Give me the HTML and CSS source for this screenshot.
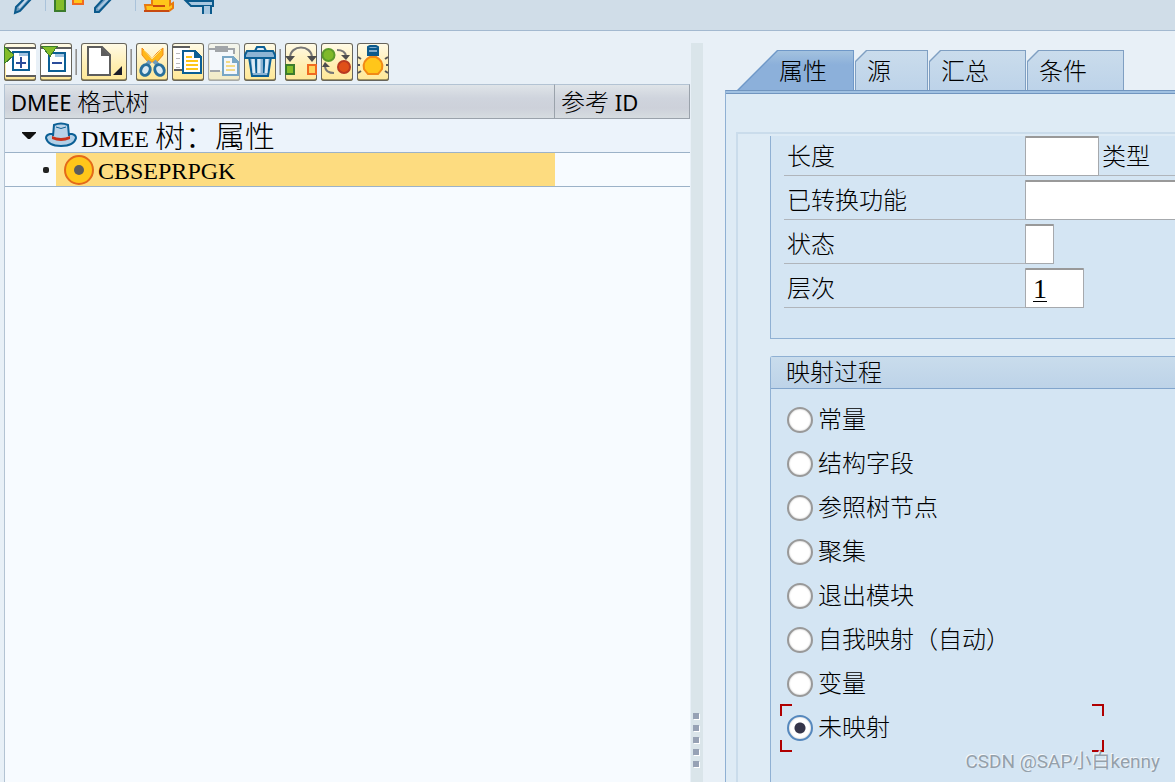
FILE: index.html
```
<!DOCTYPE html>
<html lang="zh-CN">
<head>
<meta charset="utf-8">
<title>DMEE 格式树</title>
<link rel="stylesheet" href="styles.css">
</head>
<body>
<header class="topbar">
  <svg class="topbar-icons" width="240" height="16" viewBox="0 0 240 16" aria-hidden="true">
    <path d="M15 13l1-6 8-8h7L20 11z" fill="#6f9cc0" stroke="#0b5a8c" stroke-width="2"/>
    <path d="M19 8l8-9" stroke="#c4d8ea" stroke-width="2"/>
    <path d="M45.500 0v11M135.500 0v11" stroke="#a9c2da"/>
    <path d="M55-4h10v15H55z" fill="#84bd29" stroke="#3c7c2c" stroke-width="2"/>
    <path d="M73-4h10v8H73z" fill="#ffc61a" stroke="#f06a20" stroke-width="2"/>
    <path d="M95 12v-4l9-10h8L99 12z" fill="#6f9cc0" stroke="#0b5a8c" stroke-width="2"/>
    <path d="M98 9l10-10" stroke="#a9c8e0" stroke-width="2"/>
    <path d="M152-3h18v8l3-2v5l-4 3h-23l-1-6h7z" fill="#ffc61a" stroke="#e87a10" stroke-width="2"/>
    <path d="M144 11h25M153 6h12" stroke="#c84a10" stroke-width="2" fill="none"/>
    <path d="M186 1h27v5h-22z" fill="#a9c8e0" stroke="#0b5a8c" stroke-width="2"/>
    <path d="M204 6h6v8h-6z" fill="#a9c8e0"/><path d="M203 6v8M211 6v8" stroke="#0b5a8c" stroke-width="2"/>
  </svg>
</header>
<main class="workspace">
  <section class="tree-pane">
    <div class="toolbar" role="toolbar">
      <button class="tool" aria-label="展开"><svg viewBox="0 0 32 38" shape-rendering="crispEdges"><path d="M2 5h30v28H2z" fill="#fff"/><path d="M2 5h30M2 33h30" stroke="#5d5d5d" stroke-width="2"/><path d="M9 9h16v18H9z" fill="#fff" stroke="#0b5f95" stroke-width="2"/><path d="M15 11h9" stroke="#9fc3e2" stroke-width="3"/><path d="M17 14v11M12 19.500h10" stroke="#2b4d9b" stroke-width="2"/><path d="M0 3l10 9-10 9z" fill="#84bd29" stroke="#3c7c2c"/></svg></button>
      <button class="tool" aria-label="折叠"><svg viewBox="0 0 32 38" shape-rendering="crispEdges"><path d="M1 5h30v28H1z" fill="#fff"/><path d="M1 5h30M1 33h30" stroke="#5d5d5d" stroke-width="2"/><path d="M9 10h16v18H9z" fill="#fff" stroke="#0b5f95" stroke-width="2"/><path d="M15 12h9" stroke="#9fc3e2" stroke-width="3"/><path d="M12 20h10" stroke="#2b4d9b" stroke-width="2"/><path d="M2 3.500h15l-7 10z" fill="#84bd29" stroke="#3c7c2c"/></svg></button>
      <span class="separator"></span>
      <button class="tool tool-wide" aria-label="创建"><svg viewBox="0 0 46 38"><path d="M7 4h14l8 8v20H7z" fill="#fff" stroke="#5d5d5d" stroke-width="2"/><path d="M20 4l9 9h-9z" fill="#5d5d5d"/><path d="M41 23v9h-9z" fill="#1c1c28"/></svg></button>
      <span class="separator"></span>
      <button class="tool" aria-label="剪切"><svg viewBox="0 0 32 38"><path d="M6 5l5 5 5 6 5-6 6-5v7l-6 7h-9l-6-7z" fill="#ffb81a" stroke="#f28b16"/><path d="M8 7l8 9 9-9" stroke="#ffe48a" fill="none"/><path d="M14 18l-3 4M18 18l4 4" stroke="#6f9cba" stroke-width="4"/><ellipse cx="9.500" cy="27" rx="4.500" ry="5.500" transform="rotate(25 9.500 27)" fill="#dceaf2" stroke="#286f9b" stroke-width="3"/><ellipse cx="23.500" cy="27" rx="4.500" ry="5.500" transform="rotate(-25 23.500 27)" fill="#dceaf2" stroke="#286f9b" stroke-width="3"/></svg></button>
      <button class="tool" aria-label="复制"><svg viewBox="0 0 32 38" shape-rendering="crispEdges"><path d="M2 5h15v22H2z" fill="#fff"/><path d="M1 4h17M2 27h8" stroke="#5d5d5d" stroke-width="2"/><path d="M4 10h4M4 15h4M4 20h4M4 24h4" stroke="#b9b9b9"/><path d="M11 8h12l6 6v16H11z" fill="#fff" stroke="#0b5f95" stroke-width="2"/><path d="M22 7l8 8h-8z" fill="#0b5f95"/><path d="M14 14h6M14 18h12M14 22h12M14 26h12" stroke="#ffc61a" stroke-width="2"/></svg></button>
      <button class="tool" aria-label="粘贴" disabled><svg viewBox="0 0 32 38" shape-rendering="crispEdges"><path d="M2 6h24v22H2z" fill="#fff"/><path d="M1 6h25v5M2 28h10" stroke="#5d5d5d" stroke-width="2" fill="none"/><path d="M7 3h13v6H7z" fill="#5d5d5d"/><path d="M15 14h10l5 5v13H15z" fill="#fff" stroke="#0b5f95" stroke-width="2"/><path d="M24 13l7 7h-7z" fill="#0b5f95"/><path d="M18 19h4M18 23h9M18 27h9" stroke="#ffc61a" stroke-width="2"/></svg></button>
      <button class="tool" aria-label="删除"><svg viewBox="0 0 32 38"><path d="M5 14h22l-3 19H8z" fill="#8db4d4" stroke="#0b5f95" stroke-width="2"/><path d="M12 15v15M20 15v15" stroke="#0b5f95" stroke-width="2"/><path d="M15 15v15M23 15l-1 15M9 15l1 15" stroke="#dceaf6" stroke-width="3"/><path d="M11 8l2-4h7l2 4" fill="#dceaf6" stroke="#0b5f95" stroke-width="2"/><path d="M3 8h26l2 4v3H1v-3z" fill="#8db4d4" stroke="#0b5f95" stroke-width="2"/></svg></button>
      <span class="separator"></span>
      <button class="tool" aria-label="移动"><svg viewBox="0 0 32 38"><path d="M5 15C5 1 27 1 27 15" fill="none" stroke="#777" stroke-width="2"/><path d="M0 13h10l-5 6zM22 13h10l-5 6z" fill="#4e4e4e"/><path d="M1 22h8v9H1z" fill="#84bd29" stroke="#3c7c2c" stroke-width="2"/><path d="M23 22h8v9h-8z" fill="#ffd45a" stroke="#f06a20" stroke-width="2"/></svg></button>
      <button class="tool" aria-label="转换"><svg viewBox="0 0 32 38"><circle cx="7.500" cy="12" r="6" fill="#7fb92a" stroke="#5b9a2b" stroke-width="2"/><circle cx="23" cy="24" r="6" fill="#e05018" stroke="#b93a20" stroke-width="2"/><path d="M16 7q8 0 9 6M13 30q-8 0-9-6" fill="none" stroke="#777" stroke-width="2"/><path d="M20 12h9l-4 5zM1 24h8l-5-5z" fill="#4e4e4e"/></svg></button>
      <button class="tool" aria-label="激活"><svg viewBox="0 0 32 38"><path d="M11 4l2-1h6l2 1v8H11z" fill="#80adcf" stroke="#0b5a8c" stroke-width="2"/><path d="M11 6h10M11 10h10" stroke="#0b5a8c" stroke-width="2"/><path d="M13 14h6q8 4 6 12l-4 5H11l-4-5q-2-8 6-12z" fill="#ffc61a" stroke="#f28a16" stroke-width="2"/><path d="M1 14l3 2M1 22h2M1 30l3-2M31 14l-3 2M31 22h-2M31 30l-3-2" stroke="#555" stroke-width="2"/></svg></button>
    </div>
    <table class="tree">
      <colgroup><col class="col-tree"><col class="col-ref"></colgroup>
      <thead><tr><th scope="col">DMEE <span class="head-cjk">格式树</span></th><th scope="col"><span class="head-cjk">参考</span> ID</th></tr></thead>
      <tbody>
        <tr class="root-row"><td><div class="node">
          <svg class="arrow" width="14" height="8" viewBox="0 0 14 8"><path d="M0 0h14v1l-6 6H6L0 1z" fill="#111"/></svg>
          <svg class="hat" width="32" height="26" viewBox="0 0 32 26"><path d="M1 16q0-3 4-4h22q4 1 4 4-2 8-15 8T1 16z" fill="#b3cfe6" stroke="#0b5f95" stroke-width="2"/><path d="M8 15l1-12q7-3 14 0l1 12q-8 4-16 0z" fill="#b9d2e8"/><path d="M8 14L9 3q7-3 14 0l1 11" fill="none" stroke="#0b5f95" stroke-width="2"/><path d="M11 5q5 3 10 0" stroke="#0b5f95" fill="none"/><path d="M7 14q9 4 18 0v3q-9 4-18 0z" fill="#c9301a"/></svg>
          <span class="node-text">DMEE <span class="cjk">树：属性</span></span>
        </div></td><td></td></tr>
        <tr class="item-row"><td><div class="node node-child">
          <span class="leaf"></span>
          <span class="selected"><svg width="30" height="30" viewBox="0 0 30 30"><circle cx="15" cy="15" r="14" fill="#ffc61a" stroke="#e46a18" stroke-width="2"/><circle cx="15" cy="15" r="5" fill="#5c5c5c"/></svg><span class="node-text">CBSEPRPGK</span></span>
        </div></td><td></td></tr>
      </tbody>
    </table>
    <div class="tree-space"></div>
  </section>
  <div class="splitter" role="separator"><i></i><i></i><i></i><i></i><i></i></div>
  <section class="detail-pane">
    <div class="tabs" role="tablist">
      <button class="tab tab-active" role="tab" aria-selected="true"><span>属性</span></button>
      <button class="tab tab-source" role="tab"><span>源</span></button>
      <button class="tab tab-sum" role="tab"><span>汇总</span></button>
      <button class="tab tab-sum" role="tab"><span>条件</span></button>
    </div>
    <div class="tab-body">
      <div class="frame">
        <div class="box fields">
          <div class="field"><label for="len">长度</label><input id="len" class="w-len"><label class="after" for="type">类型</label><input id="type" class="w-func"></div>
          <div class="field"><label for="func">已转换功能</label><input id="func" class="w-func"></div>
          <div class="field"><label for="status">状态</label><input id="status" class="w-status"></div>
          <div class="field"><label for="level">层次</label><input id="level" class="w-level" value="1"></div>
        </div>
        <fieldset class="box mapping">
          <legend>映射过程</legend>
          <label class="option"><input type="radio" name="map">常量</label>
          <label class="option"><input type="radio" name="map">结构字段</label>
          <label class="option"><input type="radio" name="map">参照树节点</label>
          <label class="option"><input type="radio" name="map">聚集</label>
          <label class="option"><input type="radio" name="map">退出模块</label>
          <label class="option"><input type="radio" name="map">自我映射（自动）</label>
          <label class="option"><input type="radio" name="map">变量</label>
          <label class="option option-focus"><input type="radio" name="map" checked>未映射</label>
        </fieldset>
      </div>
    </div>
  </section>
</main>
<div class="watermark">CSDN @SAP小白kenny</div>
</body>
</html>
```
FILE: styles.css
```
* { box-sizing: border-box; }
body {
  margin: 0;
  height: 100vh;
  overflow: hidden;
  position: relative;
  display: flex;
  flex-direction: column;
  background: #e8f0f7;
  color: #000;
  font: 300 24px/32px "Liberation Sans", "Noto Sans CJK SC", sans-serif;
}
button, input { font: inherit; color: inherit; margin: 0; padding: 0; }
svg { display: block; flex: none; }

.topbar { flex: none; height: 31px; background: #d0dde8; border-bottom: 1px solid #a3b9d0; }
.workspace { flex: 1; min-height: 0; display: flex; padding-top: 12px; }

.tree-pane { flex: 0 1 691px; min-width: 0; padding-left: 4px; display: flex; flex-direction: column; }
.toolbar { display: flex; align-items: center; gap: 4px; height: 38px; flex: none; }
.tool {
  width: 32px;
  height: 38px;
  border: 0;
  border-radius: 3px;
  background: linear-gradient(#fffbe8, #ffeeb0 60%, #ffe896);
  box-shadow: inset 0 0 0 1px #66645c, inset 0 -2px 0 #a4955f;
}
.tool svg { width: 100%; height: 100%; }
.tool-wide { width: 46px; }
.tool:disabled { opacity: .5; }
.separator { width: 1px; height: 26px; background: #909090; box-shadow: -1px 0 0 #b5b5b5; }

.tree { margin-top: 3px; width: 100%; table-layout: fixed; border-collapse: separate; border-spacing: 0; border-left: 1px solid #b3c3d3; padding-right: 1px; }
.col-tree { width: 550px; }
.tree th {
  height: 35px;
  padding: 0 6px;
  text-align: left;
  font: 22px/32px "Noto Sans", sans-serif;
  background: linear-gradient(#dfe4e8, #cfd4dd 40%, #cdd1da 70%, #d6dce0);
  border: 1px solid #9aa2ab;
  border-width: 1px 1px 1px 0;
  border-top-color: #b3c3d3;
}
.head-cjk { font: 300 24px/32px "Noto Sans CJK SC", sans-serif; }
.tree td { height: 34px; padding: 0; border-bottom: 1px solid #9cb2c8; }
.root-row { background: #ecf3fb; }
.item-row { background: #f7fbff; }
.node { display: flex; align-items: center; height: 33px; padding-left: 17px; white-space: nowrap; }
.hat { margin: 0 4px 2px 9px; }
.node-text { font: 24px/32px "Liberation Serif", serif; padding-top: 2px; }
.cjk { font: 300 30px/32px "Noto Sans CJK SC", sans-serif; }
.node-child { padding-left: 38px; }
.leaf { width: 6px; height: 6px; border-radius: 2px; background: #222; margin-right: 7px; }
.selected { flex: 1; height: 33px; display: flex; align-items: center; gap: 4px; padding-left: 8px; background: #fddc80; }
.tree-space { flex: 1; margin-right: 1px; background: #f7fbff; border-left: 1px solid #b3c3d3; }

.splitter { flex: none; width: 12px; background: #dae5ea; display: flex; flex-direction: column; justify-content: flex-end; gap: 6px; padding: 0 0 15px 2px; }
.splitter i { width: 6px; height: 6px; background: #97a2b5; box-shadow: 1px 1px 0 #fff; }

.detail-pane { flex: 1; min-width: 0; margin-left: 22px; padding-top: 7px; display: flex; flex-direction: column; overflow: hidden; }
.tabs { display: flex; gap: 1px; padding-left: 12px; height: 40px; flex: none; }
.tab {
  --cut: 11px;
  position: relative;
  border: 0;
  text-align: left;
  width: 73px;
  padding: 3px 0 0 12px;
  background: #7f9fc2;
  clip-path: polygon(var(--cut) 0, 100% 0, 100% 100%, 0 100%, 0 var(--cut));
}
.tab::before {
  content: "";
  position: absolute;
  inset: 1px 1px 0 1px;
  background: linear-gradient(#cadcec, #bdd3e9);
  clip-path: polygon(var(--cut) 0, 100% 0, 100% 100%, 0 100%, 0 var(--cut));
}
.tab span { position: relative; }
.tab-active { --cut: 40px; width: 117px; padding-left: 42px; background: #6f98c8; }
.tab-active::before { background: linear-gradient(#a3c2df, #8cb0da 35%); }
.tab-sum { width: 97px; }
.tab-body { flex: 1; min-height: 0; border-top: 1px solid #7195bf; border-left: 1px solid #8fb0d3; box-shadow: inset 0 2px 0 #a0c1e2, inset 0 3px 0 #7195bf; background: #deebf5; padding: 41px 0 0 10px; display: flex; }
.frame { flex: 1; min-width: 0; border: 2px solid #cadceb; border-width: 2px 0 0 2px; padding: 2px 0 0 32px; display: flex; flex-direction: column; }

.box { margin: 0; min-width: 0; border: 1px solid #8fb0d3; border-right: 0; background: #d4e5f3; padding: 0; }
.fields { border-top: 0; padding: 0 0 30px 13px; display: flex; flex-direction: column; gap: 4px; overflow: hidden; }
.field { display: flex; height: 40px; white-space: nowrap; }
.field label { flex: none; width: 241px; padding: 5px 3px 0; border-bottom: 1px solid #b0b5bb; }
.field label.after { width: 76px; }
.field input { flex: none; height: 40px; border: 1px solid #a6a9ad; border-top: 2px solid #999; border-radius: 1px; background: #fff; padding-left: 7px; }
.field .w-len { width: 74px; }
.field .w-func { width: 300px; }
.field .w-status { width: 29px; }
.field .w-level { width: 59px; font: 28px/32px "Liberation Serif", serif; text-decoration: underline 1px; text-underline-offset: 3px; }

.mapping { flex: 1; margin-top: 17px; border-bottom: 0; border-radius: 3px 0 0 0; }
.mapping legend { float: left; width: 100%; height: 32px; padding: 0 15px; margin-bottom: 9px; border-bottom: 1px solid #82a5cc; background: linear-gradient(#c9dcec, #bdd3e8); }
.option { clear: both; position: relative; display: flex; align-items: center; width: 324px; height: 44px; margin-left: 9px; padding-left: 7px; gap: 5px; }
.option input { appearance: none; width: 26px; height: 26px; border-radius: 50%; border: 2px solid #999; background: #fff; box-shadow: inset 0 0 2px #bbb; }
.option input:checked { border-color: #5688bd; background: radial-gradient(circle, #35354a 5px, #fff 6px); }
.option-focus::after {
  --c: linear-gradient(#b00000, #b00000);
  content: "";
  position: absolute;
  inset: -2px 0;
  pointer-events: none;
  background: var(--c) 0 0 / 12px 2px, var(--c) 0 0 / 2px 12px, var(--c) 100% 0 / 12px 2px, var(--c) 100% 0 / 2px 12px, var(--c) 0 100% / 12px 2px, var(--c) 0 100% / 2px 12px, var(--c) 100% 100% / 12px 2px, var(--c) 100% 100% / 2px 12px;
  background-repeat: no-repeat;
}
.watermark { position: absolute; right: 15px; bottom: 8px; font: 19px/24px Roboto, "Noto Sans CJK SC", sans-serif; color: #94a0aa; text-shadow: -1px -1px 0 #f4f8fb; white-space: nowrap; }
```
